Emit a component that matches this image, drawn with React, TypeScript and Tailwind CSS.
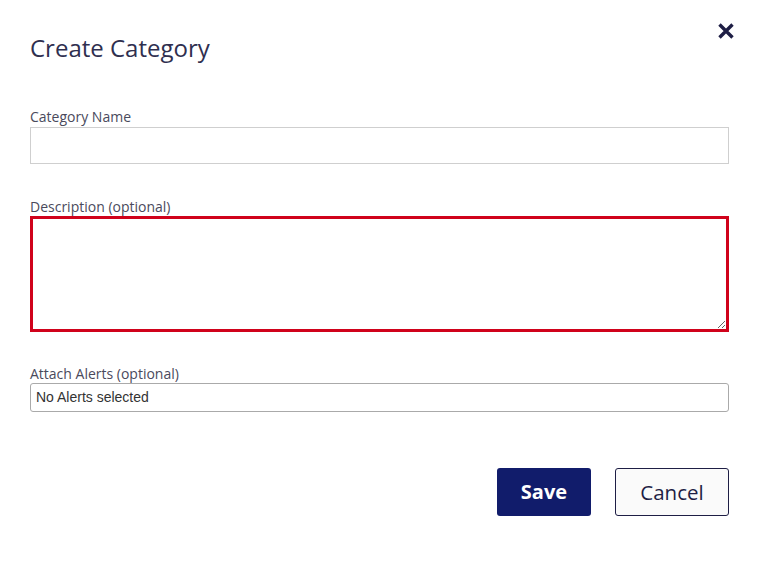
import React from "react";

export default function App() {
  return (
    <div className="w-[759px] h-[566px] bg-white relative font-['Open_Sans',sans-serif]">
      <button className="absolute left-[717px] top-[22px] w-[18px] h-[18px] flex items-center justify-center">
        <svg width="18" height="18" viewBox="0 0 18 18">
          <path d="M2.5 2.5 L15.5 15.5 M15.5 2.5 L2.5 15.5" stroke="#1e1e45" strokeWidth="3.4" strokeLinecap="butt" />
        </svg>
      </button>
      <div className="px-[30px] pt-[31px] flex flex-col">
        <h1 className="text-[24px] leading-[34px] text-[#2f2f4f] font-normal">Create Category</h1>
        <label className="mt-[43px] text-[14px] leading-[18px] text-[#4a4a5c]">Category Name</label>
        <input className="mt-[1px] w-[699px] h-[37px] border border-[#cfcfcf] outline-none" />
        <label className="mt-[34px] text-[14px] leading-[18px] text-[#4a4a5c]">Description (optional)</label>
        <textarea className="w-[699px] h-[116px] border-[3px] border-[#d0021b] outline-none resize-y" />
        <label className="mt-[33px] text-[14px] leading-[18px] text-[#4a4a5c]">Attach Alerts (optional)</label>
        <div className="w-[699px] h-[29px] border border-[#aaaaaa] rounded-[3px] flex items-center pl-[5px] font-['Liberation_Sans',Arial,sans-serif] text-[14px] text-[#333]">
          No Alerts selected
        </div>
        <div className="mt-[56px] flex justify-end gap-[24px]">
          <button className="w-[94px] h-[48px] rounded-[3px] bg-[#111c6b] text-white text-[20px] font-bold">Save</button>
          <button className="w-[114px] h-[48px] rounded-[3px] bg-[#fafafa] border border-[#1e1e45] text-[#1e1e45] text-[20.5px]">Cancel</button>
        </div>
      </div>
    </div>
  );
}
